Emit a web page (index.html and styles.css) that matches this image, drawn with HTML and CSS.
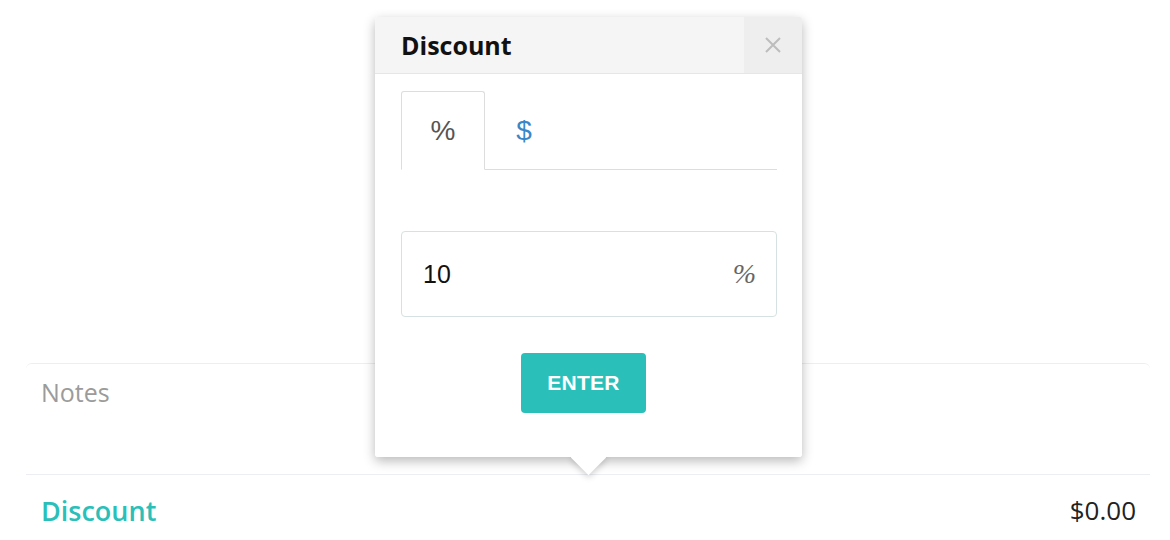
FILE: index.html
```html
<!DOCTYPE html>
<html lang="en">
<head>
  <meta charset="UTF-8">
  <meta name="viewport" content="width=device-width, initial-scale=1.0">
  <title>Discount</title>
  <link rel="stylesheet" href="styles.css">
</head>
<body>
  <div class="page">
    <div class="order-card">
      <div class="notes">Notes</div>
      <div class="summary-row">
        <span class="summary-label">Discount</span>
        <span class="summary-value">$0.00</span>
      </div>
    </div>
  </div>

  <div class="popover">
    <div class="popover-header">
      <h3>Discount</h3>
      <button type="button" class="close" aria-label="Close">
        <svg width="16" height="16" viewBox="0 0 16 16">
          <path d="M1 1 L15 15 M15 1 L1 15" stroke="#bdbdbd" stroke-width="2" fill="none"/>
        </svg>
      </button>
    </div>
    <div class="popover-body">
      <ul class="tabs">
        <li class="tab active">%</li>
        <li class="tab">$</li>
      </ul>
      <div class="amount">
        <input type="text" value="10">
        <span class="unit">%</span>
      </div>
      <div class="actions">
        <button type="button" class="enter">ENTER</button>
      </div>
    </div>
  </div>
</body>
</html>
```

FILE: styles.css
```css
body {
  margin: 0;
  padding: 0;
  background-color: #fff;
  font-family: "Open Sans", sans-serif;
  color: #222;
}
.page {
  padding: 363px 20px 0 26px;
}
.order-card {
  border-top: 1px solid #eceef2;
  border-radius: 6px 6px 0 0;
}
.notes {
  height: 99px;
  padding: 11px 0 0 15px;
  font-size: 25px;
  color: #9b9b9b;
  border-bottom: 1px solid #eceef2;
}
.summary-row {
  display: flex;
  justify-content: space-between;
  align-items: center;
  height: 70px;
  padding: 0 14px 0 15px;
}
.summary-label {
  font-size: 27px;
  font-weight: 600;
  color: #2bbfb9;
}
.summary-value {
  font-size: 26px;
  color: #222;
}
.popover {
  position: absolute;
  top: 17px;
  left: 375px;
  width: 427px;
  background-color: #fff;
  border-radius: 3px;
  box-shadow: 0 4px 12px rgba(0, 0, 0, 0.28);
  z-index: 10;
}
.popover::after {
  content: "";
  position: absolute;
  left: calc(50% - 12.5px);
  bottom: -12.5px;
  width: 25px;
  height: 25px;
  background-color: #fff;
  transform: rotate(45deg);
  box-shadow: 2px 2px 6px rgba(0, 0, 0, 0.18);
  z-index: -1;
}
.popover-header {
  display: flex;
  align-items: stretch;
  height: 56px;
  background-color: #f5f5f5;
  border-bottom: 1px solid #e6e6e6;
  border-radius: 3px 3px 0 0;
}
.popover-header h3 {
  flex: 1;
  margin: 0;
  padding-left: 26px;
  display: flex;
  align-items: center;
  font-size: 25px;
  font-weight: 700;
  color: #111;
}
.close {
  width: 58px;
  border: none;
  padding: 0;
  background-color: #eeeeee;
  border-radius: 0 3px 0 0;
  display: flex;
  align-items: center;
  justify-content: center;
  cursor: pointer;
}
.popover-body {
  padding: 17px 25px 44px 26px;
  background-color: #fff;
  border-radius: 0 0 3px 3px;
}
.tabs {
  display: flex;
  margin: 0;
  padding: 0;
  list-style: none;
  border-bottom: 1px solid #dddddd;
  height: 78px;
}
.tab {
  width: 84px;
  box-sizing: border-box;
  display: flex;
  align-items: center;
  justify-content: center;
  font-family: "Liberation Sans", Arial, sans-serif;
  font-size: 28px;
  color: #3a87c8;
  margin-bottom: -1px;
  border: 1px solid transparent;
}
.tab + .tab {
  width: 78px;
}
.tab.active {
  color: #555;
  background-color: #fff;
  border-color: #dddddd;
  border-bottom-color: #fff;
  border-radius: 3px 3px 0 0;
}
.amount {
  margin-top: 61px;
  height: 86px;
  box-sizing: border-box;
  border: 1px solid #d6e2e2;
  border-radius: 4px;
  display: flex;
  align-items: center;
  padding: 0 20px 0 21px;
}
.amount input {
  flex: 1;
  min-width: 0;
  border: none;
  outline: none;
  padding: 0;
  font-family: "Liberation Sans", Arial, sans-serif;
  font-size: 25px;
  color: #111;
}
.unit {
  font-family: "Liberation Serif", "Times New Roman", serif;
  font-style: italic;
  font-size: 28px;
  color: #666;
}
.actions {
  display: flex;
  justify-content: center;
  margin-top: 36px;
}
.enter {
  width: 125px;
  height: 60px;
  margin-right: 11px;
  border: none;
  border-radius: 4px;
  background-color: #2bbfb9;
  color: #fff;
  font-family: "Liberation Sans", Arial, sans-serif;
  font-size: 21px;
  font-weight: 700;
  letter-spacing: 0.3px;
  cursor: pointer;
}
```
